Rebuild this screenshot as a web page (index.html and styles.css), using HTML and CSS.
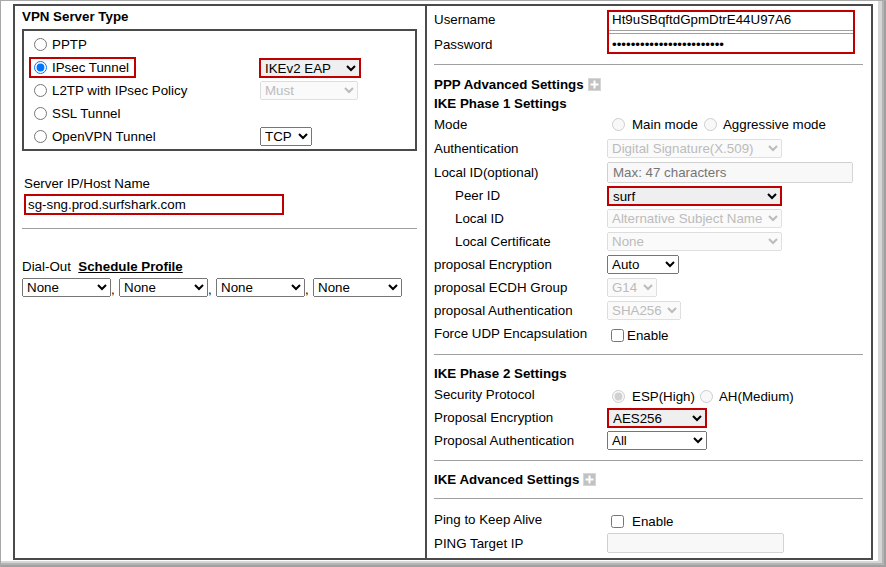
FILE: index.html
```html
<!DOCTYPE html>
<html>
<head>
<meta charset="utf-8">
<title>VPN Profile</title>
<link rel="stylesheet" href="styles.css">
</head>
<body>
<div class="frame">
  <div class="main">
    <div class="left">
      <div class="title">VPN Server Type</div>
      <div class="typebox">
        <div class="trow"><label class="opt"><input type="radio" name="t">PPTP</label></div>
        <div class="trow"><label class="opt"><span class="hl"><input type="radio" name="t" checked>IPsec Tunnel</span></label><select class="sel red w-ike"><option>IKEv2 EAP</option></select></div>
        <div class="trow"><label class="opt"><input type="radio" name="t">L2TP with IPsec Policy</label><select class="sel w-must" disabled><option>Must</option></select></div>
        <div class="trow"><label class="opt"><input type="radio" name="t">SSL Tunnel</label></div>
        <div class="trow"><label class="opt"><input type="radio" name="t">OpenVPN Tunnel</label><select class="sel w-tcp"><option>TCP</option></select></div>
      </div>
      <div class="srvlabel">Server IP/Host Name</div>
      <input class="srvinput" type="text" value="sg-sng.prod.surfshark.com">
      <div class="hr-left"></div>
      <div class="dial">Dial-Out&nbsp; <b><u>Schedule Profile</u></b></div>
      <div class="dsel"><select class="sel w-none"><option>None</option></select><span class="comma">,</span><select class="sel w-none"><option>None</option></select><span class="comma">,</span><select class="sel w-none"><option>None</option></select><span class="comma">,</span><select class="sel w-none"><option>None</option></select></div>
    </div>
    <div class="right">
      <div class="cred">
        <div class="lab1">Username</div>
        <div class="lab2">Password</div>
        <div class="credbox">
          <input class="u" type="text" value="Ht9uSBqftdGpmDtrE44U97A6">
          <input class="p" type="password" value="abcdefghijklmnopqrstuvwx">
        </div>
      </div>
      <div class="hr hr1"></div>
      <div class="h h-ppp">PPP Advanced Settings <svg class="plus" width="13" height="13" viewBox="0 0 13 13"><rect x="0.5" y="0.5" width="12" height="12" fill="#c2c2c2" stroke="#d6d6d6"/><path d="M6.5 2.5v8M2.5 6.5h8" stroke="#fff" stroke-width="2"/></svg></div>
      <div class="h">IKE Phase 1 Settings</div>

      <div class="r"><div class="l">Mode</div><div class="c"><input class="rad1" type="radio" name="m" disabled><span>Main mode</span><input class="rad2" type="radio" name="m" disabled><span>Aggressive mode</span></div></div>
      <div class="r r24"><div class="l">Authentication</div><div class="c"><select class="sel w-auth" disabled><option>Digital Signature(X.509)</option></select></div></div>
      <div class="r r24"><div class="l">Local ID(optional)</div><div class="c"><input class="txt w-lid" type="text" placeholder="Max: 47 characters" disabled></div></div>
      <div class="r"><div class="l ind">Peer ID</div><div class="c"><select class="sel red w-auth"><option>surf</option></select></div></div>
      <div class="r"><div class="l ind">Local ID</div><div class="c"><select class="sel w-auth" disabled><option>Alternative Subject Name</option></select></div></div>
      <div class="r"><div class="l ind">Local Certificate</div><div class="c"><select class="sel w-auth" disabled><option>None</option></select></div></div>
      <div class="r"><div class="l">proposal Encryption</div><div class="c"><select class="sel w-autosel"><option>Auto</option></select></div></div>
      <div class="r"><div class="l">proposal ECDH Group</div><div class="c"><select class="sel w-g14" disabled><option>G14</option></select></div></div>
      <div class="r"><div class="l">proposal Authentication</div><div class="c"><select class="sel w-sha" disabled><option>SHA256</option></select></div></div>
      <div class="r"><div class="l">Force UDP Encapsulation</div><div class="c c-low"><input class="chk1" type="checkbox"><span>Enable</span></div></div>

      <div class="hr hr2"></div>
      <div class="h h2">IKE Phase 2 Settings</div>
      <div class="r"><div class="l">Security Protocol</div><div class="c c-low"><input class="rad1" type="radio" name="s" checked disabled><span>ESP(High)</span><input class="rad3" type="radio" name="s" disabled><span>AH(Medium)</span></div></div>
      <div class="r"><div class="l">Proposal Encryption</div><div class="c"><select class="sel red w-aes"><option>AES256</option></select></div></div>
      <div class="r"><div class="l">Proposal Authentication</div><div class="c"><select class="sel w-aes"><option>All</option></select></div></div>

      <div class="hr hr3"></div>
      <div class="h h3">IKE Advanced Settings <svg class="plus" width="13" height="13" viewBox="0 0 13 13"><rect x="0.5" y="0.5" width="12" height="12" fill="#c2c2c2" stroke="#d6d6d6"/><path d="M6.5 2.5v8M2.5 6.5h8" stroke="#fff" stroke-width="2"/></svg></div>
      <div class="hr hr4"></div>
      <div class="r ping"><div class="l">Ping to Keep Alive</div><div class="c c-low"><input class="chk2" type="checkbox"><span>Enable</span></div></div>
      <div class="r r24"><div class="l">PING Target IP</div><div class="c"><input class="txt w-ping" type="text" disabled></div></div>
    </div>
  </div>
</div>
</body>
</html>
```
FILE: styles.css
```css
* { box-sizing: border-box; }
html, body { margin: 0; padding: 0; background: #fff; }
body { font: 13.333px "Liberation Sans", Arial, sans-serif; color: #000; }

.frame {
  width: 886px; height: 567px;
  border-top: 1px solid #a8a8a8; border-left: 1px solid #a8a8a8;
  padding: 3px 0 0 12px;
  box-shadow: inset -2px -2px 0 #a0a0a0, inset -4px -4px 0 #b4b4b4, inset -8px -6px 0 #d6d6d6;
}
.main { width: 860px; height: 556px; border: 2px solid #4a4a4a; display: flex; background: #fff; }
.left { width: 412px; border-right: 2px solid #4a4a4a; padding: 1px 7px 0 7px; }
.right { width: 444px; padding: 0 8px 0 7px; }

.title { font-weight: bold; line-height: 19px; margin-bottom: 3px; }
.typebox { width: 395px; border: 2px solid #4a4a4a; padding: 2px 0 1px 10px; }
.trow { height: 23px; display: flex; align-items: center; }
.opt { width: 226px; display: flex; align-items: center; }
.typebox input[type=radio] { margin: 0 5px 0 0; width: 13px; height: 13px; }
.hl { display: inline-flex; align-items: center; height: 21px; border: 2px solid #c00000; padding: 0 5px 0 3px; margin-left: -5px; }

.sel { font: 13.333px "Liberation Sans", Arial, sans-serif; height: 19px; margin: 0; color: #000; }
.sel:disabled { color: #a0a0a0; }
.red { border: 2px solid #c00000; border-radius: 0; height: 20px; }
.w-ike { width: 102px; margin-left: -1px; }
.w-must { width: 98px; }
.w-tcp { width: 52px; }
.w-none { width: 89px; }
.w-auth { width: 175px; }
.w-autosel { width: 72px; }
.w-g14 { width: 50px; }
.w-sha { width: 74px; }
.w-aes { width: 100px; }

.srvlabel { margin: 23px 0 0 2px; line-height: 19px; }
.srvinput { display: block; margin: 1px 0 0 2px; width: 260px; height: 21px; border: 2px solid #c00000; padding: 0 2px; font: 13.333px "Liberation Sans", Arial, sans-serif; color: #000; outline: none; }
.hr-left { margin-top: 13px; width: 395px; border-top: 1px solid #a0a0a0; }
.dial { margin-top: 28px; line-height: 19px; }
.dsel { margin-top: 2px; display: flex; align-items: flex-end; }
.comma { width: 8px; line-height: 14px; }

.cred { display: grid; grid-template-columns: 173px 248px; grid-template-rows: 21px 23px; margin-top: 4px; }
.lab1 { grid-row: 1; grid-column: 1; padding-top: 2px; line-height: 15px; }
.lab2 { grid-row: 2; grid-column: 1; padding-top: 6px; line-height: 15px; }
.credbox { grid-row: 1 / 3; grid-column: 2; border: 2px solid #c00000; height: 44px; display: flex; flex-direction: column; }
.credbox input { font: 13.333px "Liberation Sans", Arial, sans-serif; color: #000; border: 0; outline: none; width: 100%; margin: 0; background: #fff; }
.u { height: 19px; padding: 0 3px 3px; border-bottom: 1px solid #a0a0a0 !important; }
.p { height: 19px; margin-top: 2px !important; padding: 2px 3px 0; border-top: 1px solid #a0a0a0 !important; }

.hr { width: 429px; border-top: 1px solid #a0a0a0; }
.hr1 { margin-top: 10px; }
.hr2 { margin-top: 9px; }
.hr3 { margin-top: 8px; }
.hr4 { margin-top: 9px; }
.h { font-weight: bold; line-height: 19px; display: flex; align-items: center; }
.h-ppp { margin-top: 10px; }
.h2 { margin-top: 9px; }
.h3 { margin-top: 9px; }
.plus { margin-left: 4px; }

.r { display: grid; grid-template-columns: 173px auto; height: 23px; align-items: center; }
.r24 { height: 24px; }
.ping { margin-top: 9px; }
.l { line-height: 15px; }
.ind { padding-left: 21px; }
.c { display: flex; align-items: center; }
.c-low { padding-top: 3px; }
.c input[type=radio], .c input[type=checkbox] { width: 13px; height: 13px; margin: 0; }
.rad1 { margin: 0 7px 0 5px !important; }
.rad2 { margin: 0 6px 0 6px !important; }
.rad3 { margin: 0 6px 0 5px !important; }
.chk1 { margin: 0 3px 0 4px !important; }
.chk2 { margin: 0 8px 0 4px !important; }
.txt { font: 13.333px "Liberation Sans", Arial, sans-serif; margin: 0; padding: 0 4px; }
.w-lid { width: 246px; height: 21px; }
.w-ping { width: 177px; height: 20px; }
```
